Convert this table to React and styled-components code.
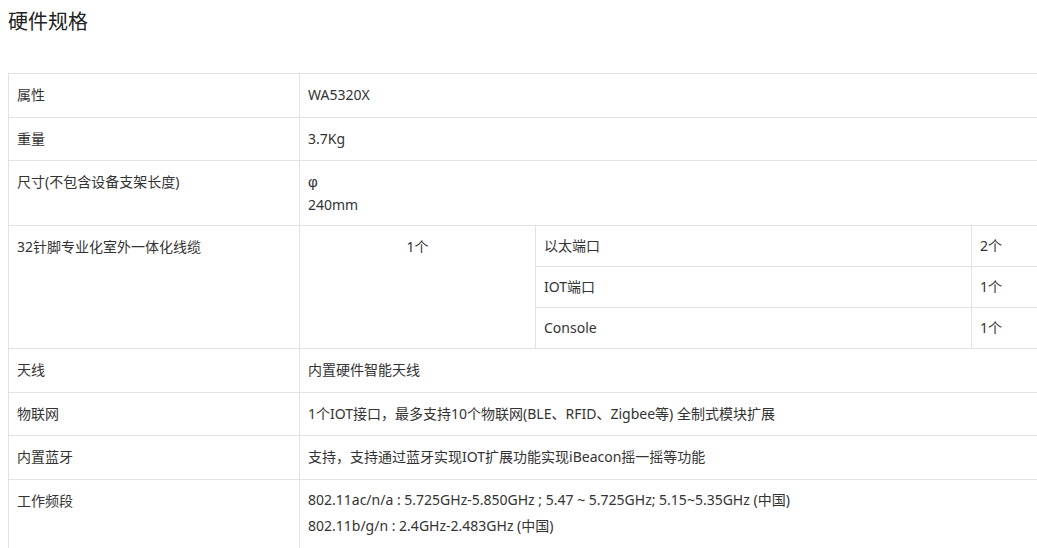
import React from "react";
import styled, { createGlobalStyle } from "styled-components";

const GlobalStyle = createGlobalStyle`
  html, body {
    margin: 0;
    padding: 0;
    overflow: hidden;
  }
  body {
    background: #ffffff;
    font-family: "Noto Sans", "Noto Sans CJK SC", sans-serif;
    color: #333333;
  }
`;

const Page = styled.section`
  display: block;
  padding: 8px 0 0 8px;
`;

const Title = styled.h3`
  margin: 0 0 37px;
  font-size: 20px;
  line-height: 28px;
  font-weight: 400;
  color: #222222;
`;

const SpecTable = styled.table`
  border-collapse: collapse;
  table-layout: fixed;
  width: 1030px;
  font-size: 14px;
  color: #333333;
`;

const Col = styled.col`
  width: ${(p) => p.$w}px;
`;

const Cell = styled.td`
  border: 1px solid #e2e2e2;
  padding: ${(p) => p.$pad || "9px 8px"};
  line-height: ${(p) => p.$lh || "24.5px"};
  vertical-align: top;
  text-align: ${(p) => p.$align || "left"};
  white-space: nowrap;
`;

const SubCell = styled(Cell)`
  line-height: 22px;
`;

const Line = styled.div`
  display: block;
`;

const Phi = styled.span`
  font-family: "Liberation Sans", sans-serif;
  font-size: 15px;
`;

const rows = [
  ["属性", "WA5320X"],
  ["重量", "3.7Kg"],
];

const rows2 = [
  ["天线", "内置硬件智能天线"],
  ["物联网", "1个IOT接口，最多支持10个物联网(BLE、RFID、Zigbee等) 全制式模块扩展"],
  ["内置蓝牙", "支持，支持通过蓝牙实现IOT扩展功能实现iBeacon摇一摇等功能"],
];

export default function App() {
  return (
    <>
      <GlobalStyle />
      <Page>
        <Title>硬件规格</Title>
        <SpecTable>
          <colgroup>
            <Col $w={291} />
            <Col $w={236} />
            <Col $w={436} />
            <Col $w={67} />
          </colgroup>
          <tbody>
            {rows.map(([k, v]) => (
              <tr key={k}>
                <Cell>{k}</Cell>
                <Cell colSpan={3}>{v}</Cell>
              </tr>
            ))}
            <tr>
              <Cell>尺寸(不包含设备支架长度)</Cell>
              <Cell colSpan={3} $lh="23px">
                <Line>
                  <Phi>φ</Phi>
                </Line>
                <Line>240mm</Line>
              </Cell>
            </tr>
            <tr>
              <Cell rowSpan={3}>32针脚专业化室外一体化线缆</Cell>
              <Cell rowSpan={3} $align="center">1个</Cell>
              <SubCell>以太端口</SubCell>
              <SubCell>2个</SubCell>
            </tr>
            <tr>
              <SubCell>IOT端口</SubCell>
              <SubCell>1个</SubCell>
            </tr>
            <tr>
              <SubCell>Console</SubCell>
              <SubCell>1个</SubCell>
            </tr>
            {rows2.map(([k, v]) => (
              <tr key={k}>
                <Cell>{k}</Cell>
                <Cell colSpan={3}>{v}</Cell>
              </tr>
            ))}
            <tr>
              <Cell>工作频段</Cell>
              <Cell colSpan={3} $pad="7px 8px 9px" $lh="26.5px">
                <Line>802.11ac/n/a : 5.725GHz-5.850GHz ; 5.47 ~ 5.725GHz; 5.15~5.35GHz (中国)</Line>
                <Line>802.11b/g/n : 2.4GHz-2.483GHz (中国)</Line>
              </Cell>
            </tr>
          </tbody>
        </SpecTable>
      </Page>
    </>
  );
}
